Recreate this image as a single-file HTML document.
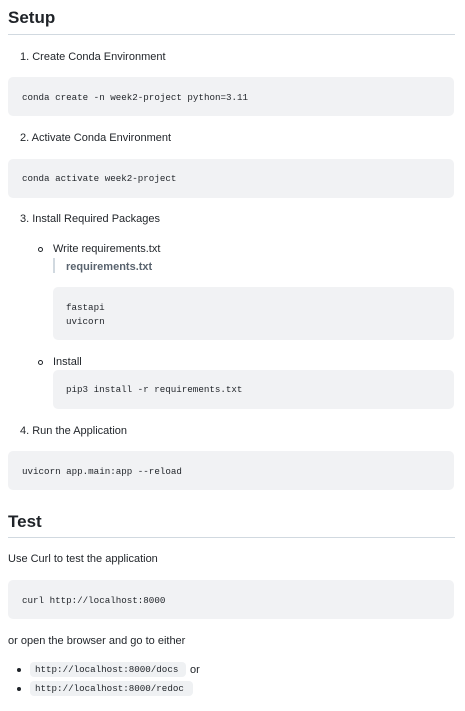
<!DOCTYPE html>
<html><head><style>
body{margin:0;width:465px;height:711px;background:#fff;font-family:"Liberation Sans",sans-serif;color:#1f2328;position:relative;overflow:hidden}
.a{position:absolute;white-space:nowrap}
.h{font-size:17px;font-weight:bold;left:8px}
.rule{position:absolute;left:8px;width:447px;height:1px;background:#d1d9e0}
.t{font-size:11px;line-height:14px}
.blk{position:absolute;background:#f1f2f4;border-radius:5px}
.m{font-family:"Liberation Mono",monospace;font-size:9.2px;line-height:14px}
.ring{position:absolute;width:3px;height:3px;border:1px solid #1f2328;border-radius:50%}
.dot{position:absolute;width:4px;height:4px;background:#1f2328;border-radius:50%}
.chip{position:absolute;background:#eff1f3;border-radius:4px;height:15px}
</style></head><body>
<div class="a h" style="top:8px">Setup</div>
<div class="rule" style="top:34px"></div>
<div class="a t" style="left:20px;top:50px">1. Create Conda Environment</div>
<div class="blk" style="left:8px;top:77px;width:446px;height:39px"></div>
<div class="a m" style="left:22px;top:91px">conda create -n week2-project python=3.11</div>
<div class="a t" style="left:20px;top:131px">2. Activate Conda Environment</div>
<div class="blk" style="left:8px;top:159px;width:446px;height:39px"></div>
<div class="a m" style="left:22px;top:172px">conda activate week2-project</div>
<div class="a t" style="left:20px;top:212px">3. Install Required Packages</div>
<div class="ring" style="left:38px;top:247px"></div>
<div class="a t" style="left:53px;top:242px">Write requirements.txt</div>
<div style="position:absolute;left:53px;top:258px;width:2px;height:15px;background:#d1d9e0"></div>
<div class="a t" style="left:66px;top:260px;font-weight:bold;color:#59636e">requirements.txt</div>
<div class="blk" style="left:53px;top:287px;width:401px;height:53px"></div>
<div class="a m" style="left:66px;top:301px">fastapi<br>uvicorn</div>
<div class="ring" style="left:38px;top:360px"></div>
<div class="a t" style="left:53px;top:355px">Install</div>
<div class="blk" style="left:53px;top:370px;width:401px;height:39px"></div>
<div class="a m" style="left:66px;top:383px">pip3 install -r requirements.txt</div>
<div class="a t" style="left:20px;top:424px">4. Run the Application</div>
<div class="blk" style="left:8px;top:451px;width:446px;height:39px"></div>
<div class="a m" style="left:22px;top:465px">uvicorn app.main:app --reload</div>
<div class="a h" style="top:512px">Test</div>
<div class="rule" style="top:537px"></div>
<div class="a t" style="left:8px;top:552px">Use Curl to test the application</div>
<div class="blk" style="left:8px;top:580px;width:446px;height:39px"></div>
<div class="a m" style="left:22px;top:594px">curl http://localhost:8000</div>
<div class="a t" style="left:8px;top:634px">or open the browser and go to either</div>
<div class="dot" style="left:17px;top:668px"></div>
<div class="chip" style="left:30px;top:662px;width:156px"></div>
<div class="a m" style="left:35px;top:663px">http://localhost:8000/docs</div>
<div class="a t" style="left:190px;top:663px">or</div>
<div class="dot" style="left:17px;top:687px"></div>
<div class="chip" style="left:30px;top:681px;width:163px"></div>
<div class="a m" style="left:35px;top:682px">http://localhost:8000/redoc</div>
</body></html>
